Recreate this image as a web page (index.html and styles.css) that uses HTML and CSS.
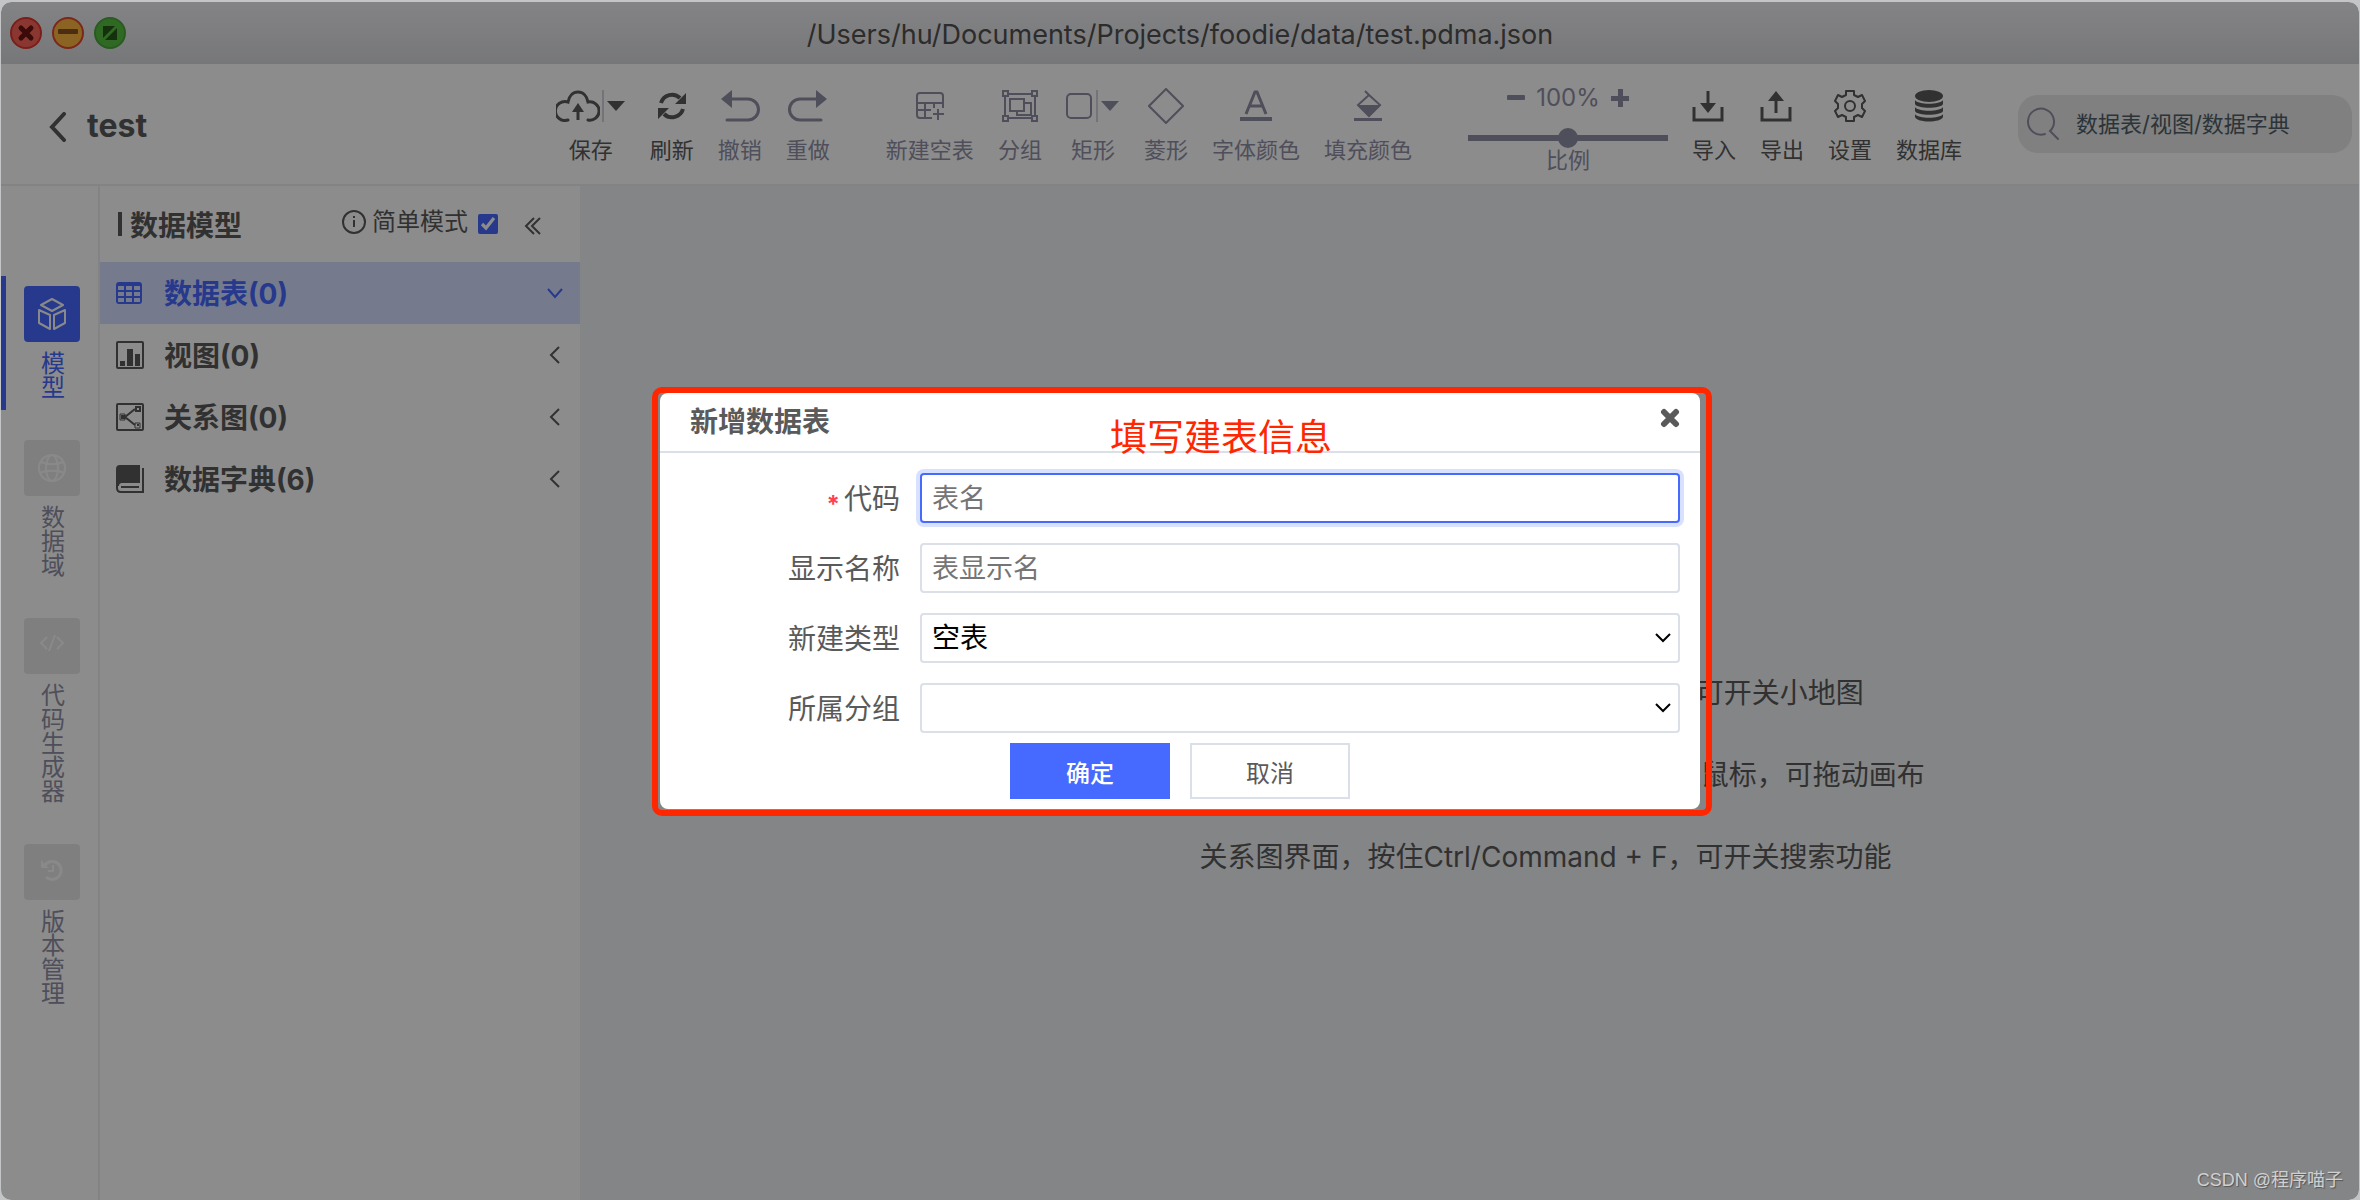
FILE: index.html
```
<!DOCTYPE html>
<html lang="zh-CN">
<head>
<meta charset="utf-8">
<meta name="viewport" content="width=device-width, initial-scale=1">
<title>test</title>
<link rel="stylesheet" href="styles.css">
</head>
<body>
<div class="window">
  <header class="titlebar">
    <div class="lights">
      <button class="light" type="button" aria-label="关闭窗口"><svg width="32" height="32" viewBox="0 0 32 32"><circle cx="16" cy="16" r="15" fill="#fc645c" stroke="#e0382e" stroke-width="2"/><path d="M11 11l10 10M21 11L11 21" stroke="#6a1410" stroke-width="5" stroke-linecap="round"/></svg></button>
      <button class="light" type="button" aria-label="最小化"><svg width="32" height="32" viewBox="0 0 32 32"><circle cx="16" cy="16" r="15" fill="#fdb440" stroke="#e0482e" stroke-width="2"/><rect x="6" y="12" width="20" height="5" rx="1" fill="#8c5220"/></svg></button>
      <button class="light" type="button" aria-label="最大化"><svg width="32" height="32" viewBox="0 0 32 32"><circle cx="16" cy="16" r="15" fill="#58bf40" stroke="#49a838" stroke-width="2"/><path d="M9 9h12L9 21zM23 11v12H11z" fill="#265816"/></svg></button>
    </div>
    <div class="path">/Users/hu/Documents/Projects/foodie/data/test.pdma.json</div>
  </header>

  <div class="header">
    <div class="project">
      <button class="back" type="button" aria-label="返回"><svg width="18" height="30" viewBox="0 0 18 30"><path d="M15 2L3 15l12 13" fill="none" stroke="currentColor" stroke-width="4" stroke-linecap="round"/></svg></button>
      <h1>test</h1>
    </div>
    <nav class="toolbar" aria-label="工具栏">
      <div class="tools">
        <button class="tool" type="button"><span class="ico">
          <svg width="44" height="32" viewBox="0 0 44 32"><path d="M12 30A9.500 9.500 0 1 1 12 12C13 6 17 2 22 2s9 4 10 10a9.200 9.200 0 1 1 0 18" fill="none" stroke="currentColor" stroke-width="3" stroke-linecap="round"/><path d="M22 13l6 9H16z" fill="currentColor"/><path d="M22 18v12" stroke="currentColor" stroke-width="3"/></svg><i class="sep"></i><svg width="20" height="12" viewBox="0 0 20 12"><path d="M1 1h18l-9 10z" fill="currentColor"/></svg></span><span>保存</span></button>
        <button class="tool" type="button"><span class="ico"><svg width="28" height="28" viewBox="0 0 28 28"><path d="M3 11A11.500 11.500 0 0 1 22 6M25 17A11.500 11.500 0 0 1 6 22" fill="none" stroke="currentColor" stroke-width="4"/><path d="M28 1v11H17zM0 27V16h11z" fill="currentColor"/></svg></span><span>刷新</span></button>
        <button class="tool off" type="button"><span class="ico"><svg width="40" height="32" viewBox="0 0 40 32"><path d="M10 9h18a10.500 10.500 0 0 1 0 21H7" fill="none" stroke="currentColor" stroke-width="3" stroke-linecap="round"/><path d="M12 0v18L1 9z" fill="currentColor"/></svg></span><span>撤销</span></button>
        <button class="tool off" type="button"><span class="ico"><svg width="40" height="32" viewBox="0 0 40 32"><path d="M30 9H12a10.500 10.500 0 0 0 0 21h21" fill="none" stroke="currentColor" stroke-width="3" stroke-linecap="round"/><path d="M28 0v18l11-9z" fill="currentColor"/></svg></span><span>重做</span></button>
      </div>
      <div class="tools">
        <button class="tool off" type="button"><span class="ico"><svg width="28" height="28" viewBox="0 0 28 28" fill="none" stroke="currentColor" stroke-width="2"><path d="M16 26H4a3 3 0 0 1-3-3V4a3 3 0 0 1 3-3h20a3 3 0 0 1 3 3v12M1 11h26M1 18h14M9 11v15M18 11v5M22 17v11M17 22h11"/></svg></span><span>新建空表</span></button>
        <button class="tool off" type="button"><span class="ico"><svg width="38" height="32" viewBox="0 0 38 32" fill="none" stroke="currentColor" stroke-width="2"><path d="M7 4h24M7 28h24M4 7v18M34 7v18M9 9h14v12H9zM24 13h6v12H16v-3"/><path d="M2 1h5v5H2zM31 1h5v5h-5zM2 26h5v5H2zM31 26h5v5h-5z"/></svg></span><span>分组</span></button>
        <button class="tool off" type="button"><span class="ico"><svg width="28" height="28" viewBox="0 0 28 28"><rect x="1" y="2" width="24" height="24" rx="4" fill="none" stroke="currentColor" stroke-width="2"/></svg><i class="sep"></i><svg width="20" height="12" viewBox="0 0 20 12"><path d="M1 1h18l-9 10z" fill="currentColor"/></svg></span><span>矩形</span></button>
        <button class="tool off" type="button"><span class="ico"><svg width="36" height="36" viewBox="0 0 36 36"><path d="M18 1l17 17-17 17L1 18z" fill="none" stroke="currentColor" stroke-width="2"/></svg></span><span>菱形</span></button>
        <button class="tool off" type="button"><span class="ico"><svg width="32" height="32" viewBox="0 0 32 32"><path d="M6 24L15 2h2l9 22M10 16h12" fill="none" stroke="currentColor" stroke-width="3"/><path d="M0 27h32v4H0z" fill="currentColor"/></svg></span><span>字体颜色</span></button>
        <button class="tool off" type="button"><span class="ico"><svg width="28" height="32" viewBox="0 0 28 32"><path d="M11 1l4 4L4 15l11 11 11-11L15 5" fill="none" stroke="currentColor" stroke-width="2"/><path d="M3 15h24L15 27zM0 28h28v3H0z" fill="currentColor"/></svg></span><span>填充颜色</span></button>
      </div>
      <div class="tools">
        <div class="zoom">
          <div class="zoomrow">
            <button type="button" aria-label="缩小"><svg width="20" height="20" viewBox="0 0 20 20"><rect x="1" y="7" width="18" height="5" rx="1" fill="currentColor"/></svg></button>
            <span>100%</span>
            <button type="button" aria-label="放大"><svg width="20" height="20" viewBox="0 0 20 20"><path d="M1 8h7V1h5v7h6v5h-6v6H8v-6H1z" fill="currentColor"/></svg></button>
          </div>
          <input id="scale" class="slider" type="range" min="0" max="200" value="100">
          <label for="scale">比例</label>
        </div>
        <button class="tool start" type="button"><span class="ico"><svg width="32" height="32" viewBox="0 0 32 32"><path d="M2 17v13h28V17M16 1v16" fill="none" stroke="currentColor" stroke-width="3"/><path d="M8 13h16l-8 10z" fill="currentColor"/></svg></span><span>导入</span></button>
        <button class="tool start" type="button"><span class="ico"><svg width="32" height="32" viewBox="0 0 32 32"><path d="M2 17v13h28V17M16 8v15" fill="none" stroke="currentColor" stroke-width="3"/><path d="M8 11h16L16 1z" fill="currentColor"/></svg></span><span>导出</span></button>
        <button class="tool" type="button"><span class="ico"><svg width="32" height="32" viewBox="0 0 32 32" fill="none" stroke="currentColor" stroke-width="2" stroke-linejoin="round"><path d="M12 1h8v4l4 2 4-2 3 6-3 3v4l3 3-3 6-4-2-4 2v4h-8v-4l-4-2-4 2-3-6 3-3v-4l-3-3 3-6 4 2 4-2z"/><circle cx="16" cy="16" r="5"/></svg></span><span>设置</span></button>
        <button class="tool" type="button"><span class="ico"><svg width="28" height="32" viewBox="0 0 28 32" fill="currentColor"><ellipse cx="14" cy="6" rx="14" ry="6"/><path d="M0 10c3 5 25 5 28 0v4c-2 5-26 5-28 0zM0 17c3 5 25 5 28 0v4c-2 5-26 5-28 0zM0 24c3 5 25 5 28 0v3c-2 6-26 6-28 0z"/></svg></span><span>数据库</span></button>
      </div>
    </nav>
    <div class="search">
      <svg width="34" height="34" viewBox="0 0 34 34" fill="none" stroke="currentColor" stroke-width="2"><path d="M19 27A13 13 0 1 1 24 24l8 8" stroke-linecap="round"/></svg>
      <input type="text" aria-label="搜索" placeholder="数据表/视图/数据字典">
    </div>
  </div>

  <div class="main">
    <nav class="rail" aria-label="功能">
      <a class="railitem active" href="#"><span class="railbox"><svg width="28" height="32" viewBox="0 0 28 32" fill="none" stroke="currentColor" stroke-width="2" stroke-linejoin="round"><path d="M14 1l11 6-11 6L3 7zM1 12l11 5v14L1 25zM27 12l-11 5v14l11-6z"/></svg></span><span class="railtext">模型</span></a>
      <a class="railitem" href="#"><span class="railbox"><svg width="28" height="28" viewBox="0 0 28 28" fill="none" stroke="currentColor" stroke-width="2"><circle cx="14" cy="14" r="13"/><ellipse cx="14" cy="14" rx="6" ry="13"/><path d="M3 8c6 3 16 3 22 0M2 19c6-3 18-3 24 0"/></svg></span><span class="railtext">数据域</span></a>
      <a class="railitem" href="#"><span class="railbox"><svg width="26" height="24" viewBox="0 0 26 24" fill="none" stroke="currentColor" stroke-width="2"><path d="M8 3L2 9l6 6M18 3l6 6-6 6M16 1l-6 16"/></svg></span><span class="railtext">代码生成器</span></a>
      <a class="railitem" href="#"><span class="railbox"><svg width="22" height="26" viewBox="0 0 22 26" fill="none" stroke="currentColor"><path d="M4 6a9 9 0 1 1 1 12" stroke-width="3"/><path d="M0 1v8h8z" fill="currentColor" stroke="none"/><path d="M12 6v6H7" stroke-width="2"/></svg></span><span class="railtext">版本管理</span></a>
    </nav>

    <aside class="panel">
      <div class="panelhead">
        <h2>数据模型</h2>
        <div class="mode">
          <svg width="24" height="24" viewBox="0 0 24 24" fill="none" stroke="currentColor" stroke-width="2"><circle cx="12" cy="12" r="11"/><path d="M12 10v7M12 6v2"/></svg>
          <label for="simple">简单模式</label>
        </div>
        <input id="simple" type="checkbox" checked>
        <button class="fold" type="button" aria-label="收起"><svg width="18" height="18" viewBox="0 0 18 18" fill="none" stroke="currentColor" stroke-width="2"><path d="M10 1L2 9l8 8M16 1L8 9l8 8"/></svg></button>
      </div>
      <ul class="tree">
        <li><a class="node selected" href="#"><svg width="28" height="28" viewBox="0 0 28 28"><path fill-rule="evenodd" d="M3 3h20a3 3 0 0 1 3 3v16a3 3 0 0 1-3 3H3a3 3 0 0 1-3-3V6a3 3 0 0 1 3-3zM2 7v4h6V7zM10 7v4h6V7zM18 7v4h6V7zM2 13v4h6v-4zM10 13v4h6v-4zM18 13v4h6v-4zM2 19v4h6v-4zM10 19v4h6v-4zM18 19v4h6v-4z" fill="currentColor"/></svg><span>数据表(0)</span><svg class="arrow" width="18" height="18" viewBox="0 0 18 18"><path d="M2 5l7 8 7-8" fill="none" stroke="currentColor" stroke-width="2"/></svg></a></li>
        <li><a class="node" href="#"><svg width="28" height="28" viewBox="0 0 28 28"><rect x="1" y="1" width="26" height="26" rx="1" fill="none" stroke="currentColor" stroke-width="2"/><path d="M4 20h5v5H4zM11 8h6v17h-6zM19 13h5v12h-5z" fill="currentColor"/></svg><span>视图(0)</span><svg class="arrow" width="18" height="18" viewBox="0 0 18 18"><path d="M13 1L5 9l8 8" fill="none" stroke="currentColor" stroke-width="2"/></svg></a></li>
        <li><a class="node" href="#"><svg width="28" height="28" viewBox="0 0 28 28" fill="none" stroke="currentColor"><rect x="1" y="1" width="26" height="26" rx="1" stroke-width="2"/><path d="M19 6L9 14l10 8" stroke-width="2"/><path d="M20 4h4v4h-4z" stroke-width="2"/><path d="M4 11h5v6H4zM19 20h5v5h-5z"/><path d="M6 13h2v2H6zM21 22h2" stroke-width="2"/></svg><span>关系图(0)</span><svg class="arrow" width="18" height="18" viewBox="0 0 18 18"><path d="M13 1L5 9l8 8" fill="none" stroke="currentColor" stroke-width="2"/></svg></a></li>
        <li><a class="node" href="#"><svg width="28" height="28" viewBox="0 0 28 28" fill="none" stroke="currentColor" stroke-width="2"><path d="M4 0h20v18H6q-3 0-3 3H0V4q0-4 4-4z" fill="currentColor" stroke="none"/><path d="M1 20v3q0 4 4 4h22V3M5 22h18"/></svg><span>数据字典(6)</span><svg class="arrow" width="18" height="18" viewBox="0 0 18 18"><path d="M13 1L5 9l8 8" fill="none" stroke="currentColor" stroke-width="2"/></svg></a></li>
      </ul>
    </aside>

    <main class="canvas">
      <div class="hints">
        <p>关系图界面，按住Ctrl/Command + E，可开关小地图</p>
        <p>关系图界面，按住Ctrl/Command，按住鼠标，可拖动画布</p>
        <p>关系图界面，按住Ctrl/Command + F，可开关搜索功能</p>
      </div>
    </main>
  </div>

  <div class="overlay">
    <form class="modal" role="dialog" aria-labelledby="dlg">
      <div class="modalhead">
        <h2 id="dlg">新增数据表</h2>
        <button class="close" type="button" aria-label="关闭"><svg width="20" height="20" viewBox="0 0 20 20"><path d="M4 4l12 12M16 4L4 16" stroke="currentColor" stroke-width="6" stroke-linecap="round"/></svg></button>
      </div>
      <div class="fields">
        <label for="code"><b>*</b>代码</label><input id="code" class="focused" type="text" placeholder="表名">
        <label for="name">显示名称</label><input id="name" type="text" placeholder="表显示名">
        <label for="type">新建类型</label><select id="type"><option>空表</option></select>
        <label for="group">所属分组</label><select id="group"><option></option></select>
      </div>
      <div class="actions">
        <button class="ok" type="button">确定</button>
        <button class="cancel" type="button">取消</button>
      </div>
      <div class="frame"></div>
      <div class="note">填写建表信息</div>
    </form>
  </div>
  <div class="watermark">CSDN @程序喵子</div>
</div>
</body>
</html>
```

FILE: styles.css
```
* { box-sizing: border-box; }

body {
  margin: 0;
  padding: 2px 1px 0;
  min-height: 100vh;
  display: flex;
  background: #c4c5c7;
  color: #5a5a5a;
  font-family: Inter, "Noto Sans CJK SC", sans-serif;
  font-size: 28px;
}

h1, h2, p, ul { margin: 0; padding: 0; font-size: 28px; }
ul { list-style: none; }
a { color: inherit; text-decoration: none; }
svg { display: block; flex: none; }

button {
  padding: 0;
  border: 0;
  background: none;
  color: inherit;
  font: inherit;
}

.window {
  position: relative;
  flex: 1;
  min-width: 0;
  display: flex;
  flex-direction: column;
  overflow: hidden;
  border-radius: 10px;
  background: #fff;
}

/* Title bar */
.titlebar {
  display: flex;
  align-items: center;
  height: 62px;
  padding: 0 9px;
  background: linear-gradient(#eff0f3, #d8d9dd);
}
.lights { display: flex; flex: 1; gap: 10px; }
.light { width: 32px; height: 32px; }
.path { padding-top: 4px; line-height: 36px; font-size: 27px; color: #505050; }
.titlebar::after { content: ""; flex: 1; }

/* Header with tools */
.header {
  display: flex;
  align-items: center;
  height: 122px;
  padding-right: 7px;
  border-bottom: 2px solid #eee;
}
.project {
  display: flex;
  flex: 1;
  align-items: center;
  gap: 20px;
  padding: 4px 0 0 48px;
}
.project h1 { font-size: 32px; line-height: 36px; }
.back { padding-top: 2px; }
.toolbar { display: flex; gap: 56px; margin-right: 56px; padding-top: 10px; }
.tools { display: flex; gap: 24px; }
.tool {
  display: flex;
  flex-direction: column;
  align-items: center;
  gap: 12px;
  font-size: 22px;
  line-height: 24px;
  white-space: nowrap;
}
.tool.off, .zoom { color: #9090a6; }
.tool.start { align-items: flex-start; }
.ico { display: flex; align-items: center; height: 40px; }
.sep { width: 2px; height: 32px; margin: 0 2px; background: #d2d2dc; }

.zoom {
  display: flex;
  flex-direction: column;
  align-items: center;
  width: 200px;
  font-size: 22px;
  line-height: 24px;
}
.zoomrow { display: flex; align-items: center; gap: 10px; font-size: 24px; margin-bottom: 18px; }
.slider {
  -webkit-appearance: none;
  appearance: none;
  width: 100%;
  height: 20px;
  margin: 0;
  background: linear-gradient(currentColor, currentColor) center / 100% 6px no-repeat;
  color: inherit;
}
.slider::-webkit-slider-thumb {
  -webkit-appearance: none;
  width: 20px;
  height: 20px;
  border-radius: 50%;
  background: #9090a6;
}

.search {
  display: flex;
  align-items: center;
  gap: 16px;
  width: 334px;
  height: 58px;
  padding: 0 8px;
  border-radius: 20px;
  background: #e9e9e9;
  color: #9090a6;
}
.search input {
  flex: 1;
  min-width: 0;
  padding: 0;
  border: 0;
  background: none;
  font: inherit;
  font-size: 22px;
}
.search input::placeholder { color: #506068; opacity: 1; }

/* Body */
.main { display: flex; flex: 1; }

.rail {
  display: flex;
  flex-direction: column;
  gap: 20px;
  width: 99px;
  padding-top: 90px;
  border-right: 2px solid #eee;
}
.railitem {
  display: flex;
  flex-direction: column;
  align-items: center;
  gap: 10px;
  padding: 10px 0;
  border-left: 5px solid transparent;
  color: #9090a6;
}
.railbox {
  display: flex;
  align-items: center;
  justify-content: center;
  width: 56px;
  height: 56px;
  border-radius: 4px;
  background: #e8e8e8;
  color: #fafafa;
}
.railtext { width: 26px; padding-left: 2px; font-size: 24px; line-height: 24px; word-break: break-all; }
.active { border-color: #4669ff; color: #4669ff; }
.active .railbox { background: #4669ff; }

.panel { width: 480px; }
.panelhead {
  display: flex;
  align-items: center;
  height: 76px;
  padding: 0 38px 0 18px;
  font-size: 24px;
}
.panelhead h2 {
  display: flex;
  align-items: center;
  gap: 8px;
  flex: 1;
}
.panelhead h2::before { content: ""; width: 4px; height: 24px; background: currentColor; }
.mode { display: flex; align-items: center; gap: 6px; margin: 0 10px 4px 0; line-height: 32px; }
.panelhead input { width: 20px; height: 20px; margin: 0; accent-color: #4669ff; }
.fold { margin-left: 26px; padding-top: 4px; }

.node {
  display: flex;
  align-items: center;
  gap: 20px;
  height: 62px;
  padding: 0 16px;
  font-weight: 700;
}
.node span { padding-bottom: 2px; }
.node.selected { background: #d6dfff; color: #4669ff; }
.arrow { margin-left: auto; }

.canvas {
  display: flex;
  flex: 1;
  align-items: center;
  justify-content: center;
  background: #f0f2f4;
}
.hints {
  display: flex;
  flex-direction: column;
  justify-content: flex-end;
  width: 540px;
  height: 410px;
  line-height: 82px;
  white-space: nowrap;
}

/* Dialog */
.overlay {
  position: absolute;
  inset: 0;
  display: flex;
  align-items: center;
  justify-content: center;
  background: rgba(0, 0, 0, 0.45);
}
.modal {
  position: relative;
  width: 1040px;
  border-radius: 8px;
  background: #fff;
}
.modalhead {
  display: flex;
  align-items: center;
  justify-content: space-between;
  height: 60px;
  padding: 0 20px 4px 30px;
  border-bottom: 2px solid #dadfe8;
}
.close { margin-bottom: 4px; }
.fields {
  display: grid;
  grid-template-columns: 220px 1fr;
  gap: 20px;
  align-items: center;
  padding: 20px 20px 10px;
}
.fields label { line-height: 40px; padding-top: 2px; text-align: right; }
.fields b { margin-right: 4px; color: #ff4050; font-size: 24px; vertical-align: -4px; line-height: 24px; }
.fields input, .fields select {
  width: 100%;
  height: 50px;
  padding: 0 10px;
  border: 2px solid #dadfe8;
  border-radius: 4px;
  background: #fff;
  color: #000;
  font: inherit;
}
.fields input { font-size: 27px; }
.fields input::placeholder { color: #757575; opacity: 1; }
.fields .focused { border-color: #4669ff; box-shadow: 0 0 0 4px #d8e1ff; }
.fields select {
  -webkit-appearance: none;
  appearance: none;
  background: #fff url("data:image/svg+xml,%3Csvg xmlns='http://www.w3.org/2000/svg' width='16' height='12' viewBox='0 0 16 12'%3E%3Cpath d='M1 2l7 7 7-7' fill='none' stroke='%23000' stroke-width='2'/%3E%3C/svg%3E") right 7px center no-repeat;
}
.actions {
  display: flex;
  justify-content: center;
  gap: 20px;
  padding-bottom: 10px;
  font-size: 24px;
}
.actions button { width: 160px; height: 56px; }
.ok { background: #4669ff; color: #fff; font-weight: 500; }
.actions .cancel { border: 2px solid #dadfe8; }

/* Red callout drawn over the dialog */
.frame {
  position: absolute;
  inset: -6px -12px -7px -8px;
  border: 6px solid #ff2600;
  border-radius: 10px;
  pointer-events: none;
}
.note {
  position: absolute;
  top: 24px;
  left: 450px;
  color: #ff2600;
  font-size: 37px;
  line-height: 42px;
}

.watermark {
  position: absolute;
  right: 16px;
  bottom: 8px;
  color: #d0d0d0;
  font-family: "Liberation Sans", "Noto Sans CJK SC", sans-serif;
  font-size: 18px;
  line-height: 24px;
  text-shadow: 1px 1px 1px #555;
}
```
